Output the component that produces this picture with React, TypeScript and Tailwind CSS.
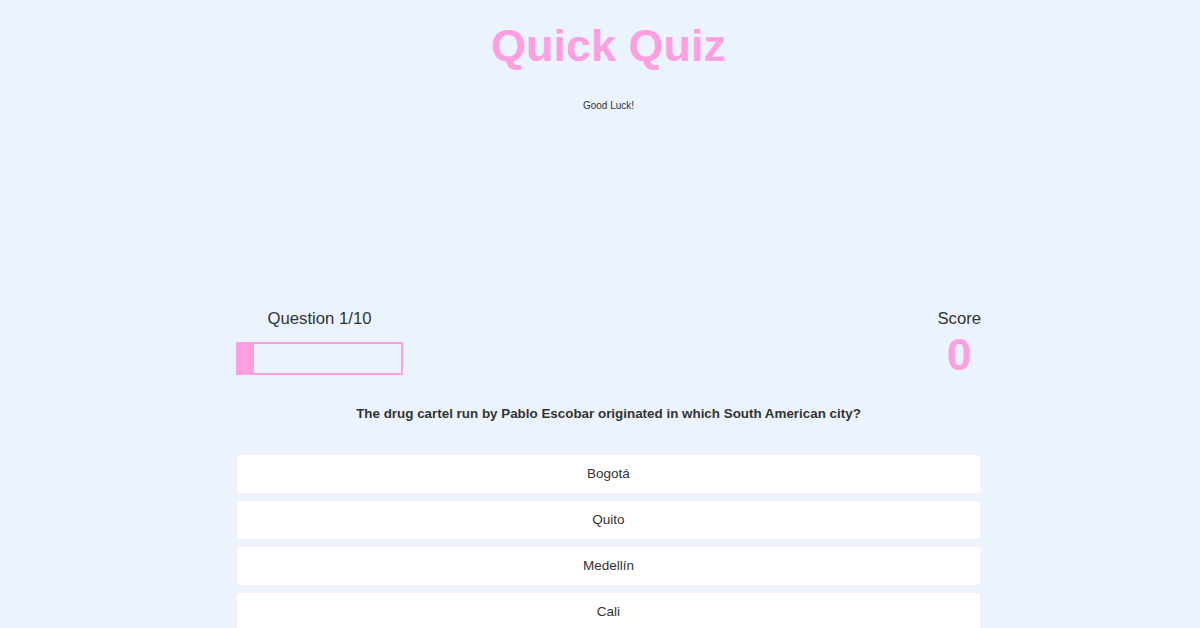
import React from "react";

const answers = ["Bogotá", "Quito", "Medellín", "Cali"];

export default function App() {
  return (
    <div
      className="min-h-[628px] w-full bg-[#ebf3ff] pl-[17px] text-[#333333]"
      style={{ fontFamily: '"Liberation Sans", Arial, sans-serif' }}
    >
      <div className="flex flex-col items-center pt-[20px]">
        <h1 className="text-[45px] font-bold leading-[52px] text-[#ff9ee0]">Quick Quiz</h1>
        <p className="mt-[28px] text-[10px] leading-[12px] text-[#333333]">Good Luck!</p>
      </div>

      <div className="mx-auto mt-[197px] w-[745px]">
        <div className="flex items-start justify-between">
          <div className="flex w-[167px] flex-col items-center">
            <p className="text-[16.7px] leading-[20px]">Question 1/10</p>
            <div className="mt-[13px] h-[33px] w-[167px] border-[2px] border-[#ff9ee0]">
              <div className="h-full w-[10%] bg-[#ff9ee0]" />
            </div>
          </div>
          <div className="flex flex-col items-center">
            <p className="text-[16.7px] leading-[20px]">Score</p>
            <p className="mt-[3px] text-[45px] font-bold leading-[45px] text-[#ff9ee0]">0</p>
          </div>
        </div>

        <p className="mt-[28px] text-center text-[13.4px] font-bold leading-[17px] text-[#333333]">
          The drug cartel run by Pablo Escobar originated in which South American city?
        </p>

        <div className="mt-[32px] flex flex-col gap-[6px]">
          {answers.map((a) => (
            <button
              key={a}
              className="flex h-[40px] w-full items-center justify-center rounded-[4px] border border-[#fdeaf6] bg-white text-[13.5px] text-[#333333]"
            >
              {a}
            </button>
          ))}
        </div>
      </div>
    </div>
  );
}
